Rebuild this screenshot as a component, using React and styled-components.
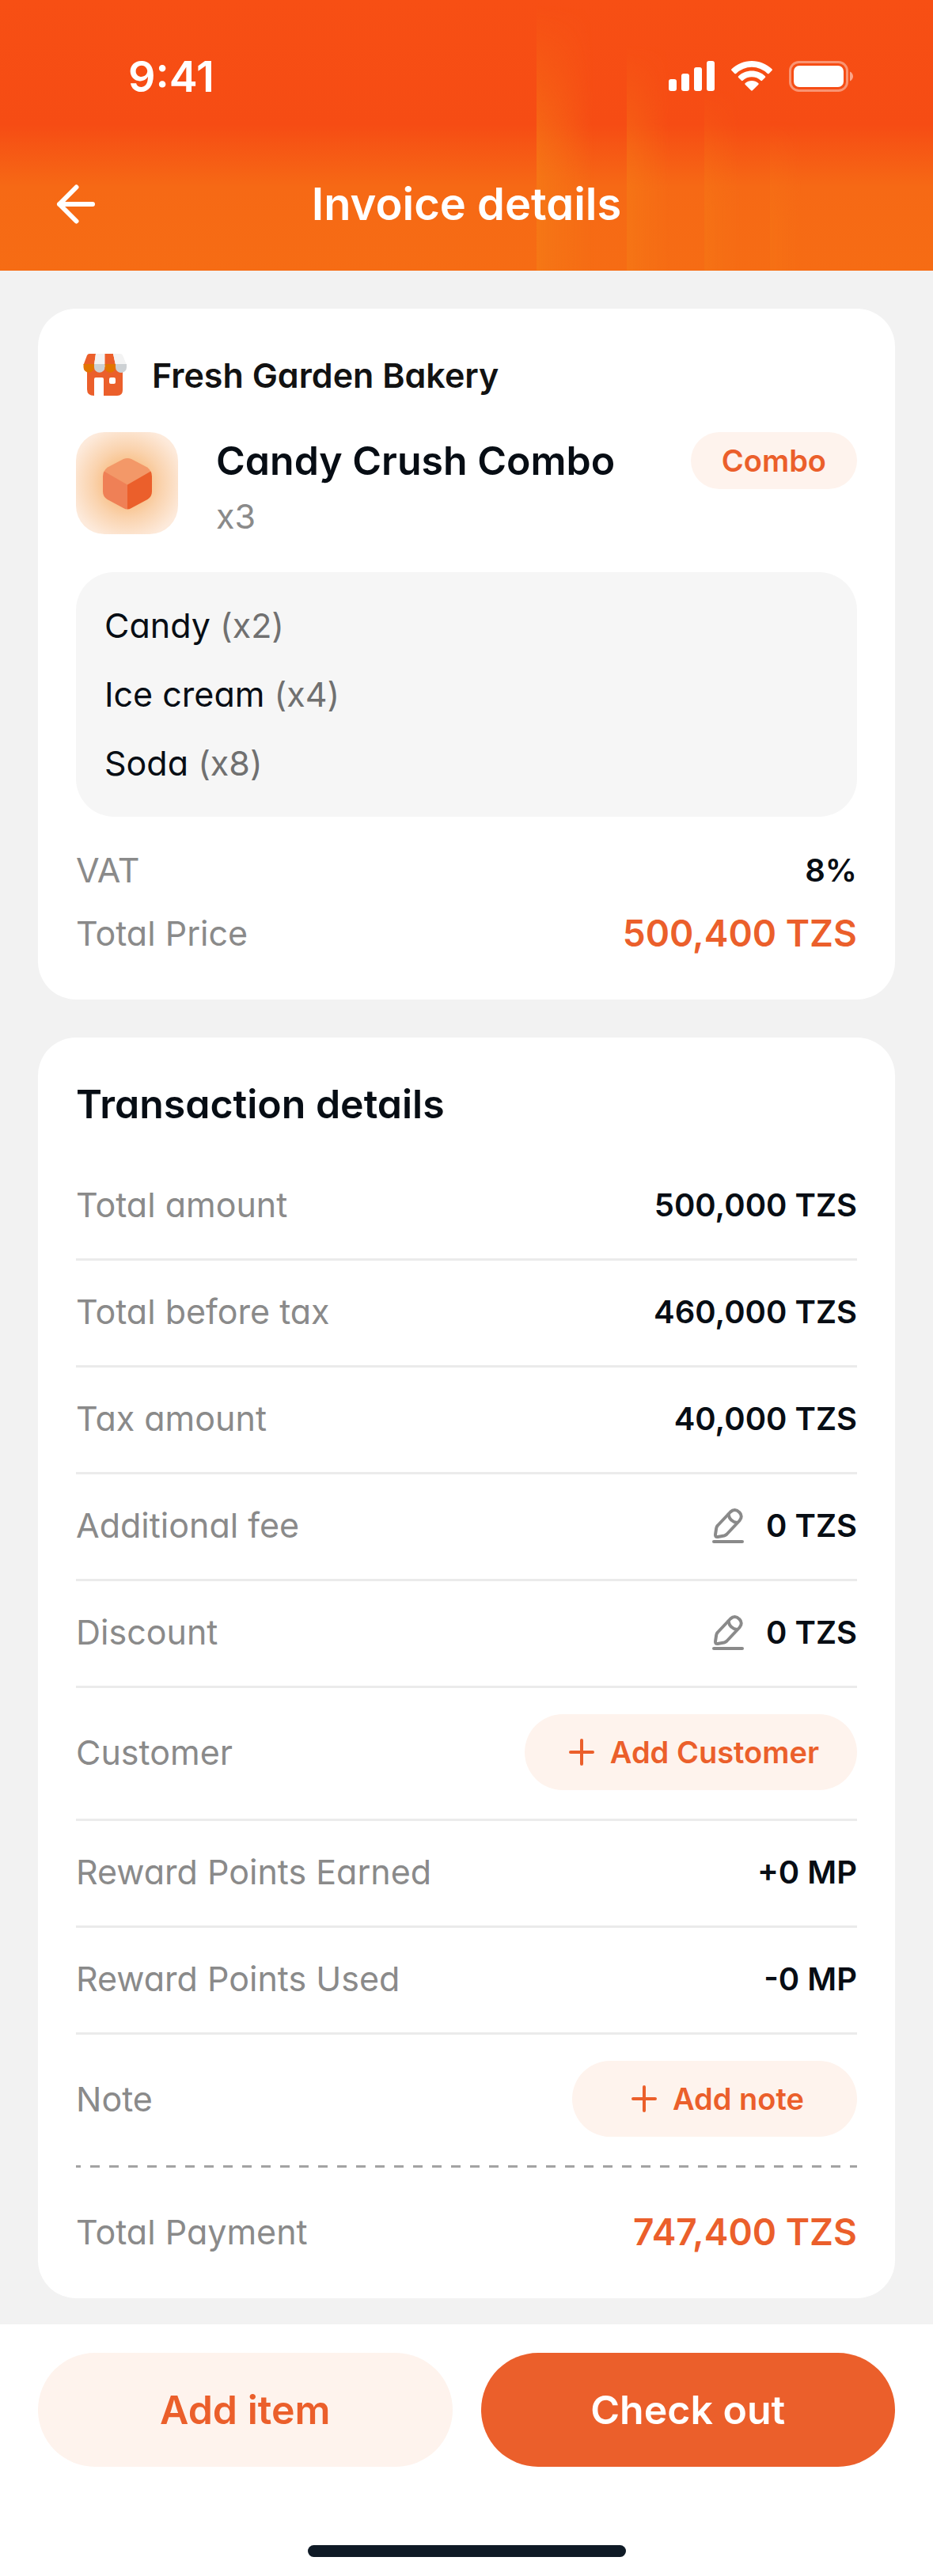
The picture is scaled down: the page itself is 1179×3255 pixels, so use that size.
import styled, { createGlobalStyle } from "styled-components";

const GlobalStyle = createGlobalStyle`
  * {
    box-sizing: border-box;
  }
  body {
    margin: 0;
    background: #f2f2f2;
    color: #070d14;
    font-family: Inter, "Open Sans", sans-serif;
    font-feature-settings: "cv11";
    font-size: 43px;
    line-height: 63px;
  }
  button {
    border: none;
    padding: 0;
    font: inherit;
    font-feature-settings: inherit;
    cursor: pointer;
  }
  svg {
    display: block;
    flex: none;
  }
`;

const Page = styled.div`
  display: flex;
  flex-direction: column;
  min-height: 100vh;
`;

const Header = styled.header`
  position: relative;
  color: white;
  background: linear-gradient(#f74f14 0, #f64c14 46%, #f66915 69%, #f66c14);
`;
const Beam = styled.span`
  position: absolute;
  bottom: 0;
  left: ${(props) => props.$left}%;
  width: ${(props) => props.$width}px;
  height: ${(props) => props.$height}px;
  background: linear-gradient(
    90deg,
    #f57a16,
    rgba(245, 118, 22, 0.7) 40%,
    rgba(246, 112, 20, 0)
  );
  opacity: ${(props) => props.$strength};
  mask-image: linear-gradient(transparent, black 65%);
`;
const StatusBar = styled.div`
  position: relative;
  display: flex;
  align-items: center;
  justify-content: space-between;
  height: 174px;
  padding: 18px 100px 0 162px;
`;
const Clock = styled.time`
  font-size: 54px;
  font-weight: 600;
`;
const StatusIcons = styled.div`
  display: flex;
  align-items: center;
  gap: 21px;
`;
const NavBar = styled.nav`
  position: relative;
  display: grid;
  grid-template-columns: 72px 1fr 72px;
  align-items: center;
  height: 168px;
  padding: 0 60px;
`;
const BackButton = styled.button`
  display: flex;
  align-items: center;
  height: 72px;
  background: none;
  color: inherit;
`;
const PageTitle = styled.h1`
  margin: 0;
  font-size: 56px;
  font-weight: 600;
  line-height: 78px;
  text-align: center;
`;

const Main = styled.main`
  flex: 1;
  display: flex;
  flex-direction: column;
  gap: 48px;
  padding: 48px 48px 33px;
`;
const Card = styled.section`
  padding: 48px;
  border-radius: 48px;
  background: white;
`;
const Shop = styled.div`
  display: flex;
  align-items: center;
  gap: 24px;
  margin-bottom: 36px;
  color: #121212;
`;
const ShopName = styled.h2`
  margin: 0;
  font-size: 43px;
  font-weight: 600;
`;
const Product = styled.div`
  display: flex;
  align-items: flex-start;
  gap: 48px;
  margin-bottom: 39px;
`;
const Thumb = styled.div`
  display: flex;
  align-items: center;
  justify-content: center;
  width: 129px;
  height: 129px;
  border-radius: 36px;
  background: radial-gradient(circle, #f8bf85 25%, #fad3ae 48%, #fdeadb 80%);
`;
const ProductInfo = styled.div`
  flex: 1;
  display: flex;
  flex-direction: column;
  gap: 3px;
`;
const Heading = styled.h3`
  margin: 0;
  font-size: 50px;
  font-weight: 600;
  line-height: 72px;
`;
const Muted = styled.span`
  color: ${(props) => (props.$dark ? "#707070" : "#8a8a8a")};
`;
const Badge = styled.span`
  padding: 0 39px;
  border-radius: 36px;
  background: #fef3ed;
  color: #eb5f2b;
  font-size: 38px;
  font-weight: 600;
  line-height: 72px;
`;
const Contents = styled.ul`
  display: flex;
  flex-direction: column;
  gap: 24px;
  margin: 0 0 36px;
  padding: 36px;
  border-radius: 48px;
  background: #f6f6f6;
  list-style: none;
`;
const Line = styled.div`
  display: flex;
  align-items: center;
  justify-content: space-between;
`;
const PriceLine = styled(Line)`
  margin-top: 12px;
`;
const Value = styled.span`
  display: flex;
  align-items: center;
  gap: 24px;
  font-size: 40px;
  font-weight: 600;
`;
const Price = styled.strong`
  color: #eb5f2b;
  font-size: 46px;
  font-weight: 600;
  line-height: 72px;
`;
const Rows = styled.div`
  margin-top: 27px;
`;
const Row = styled(Line)`
  padding: 33px 0 36px;
  border-bottom: 3px solid #ebebeb;

  &:last-child {
    border-bottom-color: transparent;
    background: repeating-linear-gradient(
        90deg,
        #a3a3a3 0 6px,
        transparent 6px 18px,
        #a3a3a3 18px 24px
      )
      0 100% / 100% 3px no-repeat border-box;
  }
`;
const PaymentLine = styled(Line)`
  margin-top: 45px;
`;
const IconButton = styled.button`
  background: none;
  color: #8a8a8a;
`;
const AddButton = styled.button`
  display: flex;
  align-items: center;
  justify-content: center;
  gap: 12px;
  min-width: 360px;
  height: 96px;
  padding: 0 48px;
  border-radius: 48px;
  background: #fef3ed;
  color: #eb5f2b;
  font-size: 38px;
  font-weight: 600;
`;

const Footer = styled.footer`
  padding: 36px 48px 24px;
  background: white;
`;
const Actions = styled.div`
  display: grid;
  grid-template-columns: 1fr 1fr;
  gap: 36px;
`;
const ActionButton = styled.button`
  height: 144px;
  border-radius: 72px;
  background: ${(props) => (props.$primary ? "#eb5f2b" : "#fef3ed")};
  color: ${(props) => (props.$primary ? "white" : "#eb5f2b")};
  font-size: 50px;
  font-weight: 600;
`;
const HomeIndicator = styled.div`
  width: 402px;
  height: 15px;
  margin: 99px auto 0;
  border-radius: 8px;
  background: #0f1a26;
`;

const SignalIcon = () => (
  <svg width="58" height="38" viewBox="0 0 58 38" fill="white">
    <rect x="0" y="23" width="10" height="15" rx="3" />
    <rect x="16" y="16" width="10" height="22" rx="3" />
    <rect x="32" y="8" width="10" height="30" rx="3" />
    <rect x="48" y="0" width="10" height="38" rx="3" />
  </svg>
);

const WifiIcon = () => (
  <svg width="52" height="38" viewBox="0 0 52 38" fill="white">
    <path d="M26 0C35.600 0 44.800 3.700 51.500 10.300Q52.400 11.200 51.500 12.100L47.700 15.900Q46.800 16.700 45.900 15.900A28.500 28.500 0 0 0 6.100 15.900Q5.200 16.700 4.300 15.900L.5 12.100Q-.4 11.200 .5 10.300C7.200 3.700 16.400 0 26 0Z" />
    <path d="M26 12.500C32.400 12.500 38.400 14.900 42.900 19.200Q43.800 20.100 42.900 21L39.100 24.800Q38.200 25.600 37.300 24.800A16.500 16.500 0 0 0 14.700 24.800Q13.800 25.600 12.900 24.800L9.100 21Q8.200 20.100 9.100 19.200C13.600 14.900 19.600 12.500 26 12.500Z" />
    <path d="M26 25C29.100 25 32 26.100 34.200 28.100Q35.200 29 34.200 30L26.900 37.300Q26 38.100 25.100 37.300L17.800 30Q16.800 29 17.800 28.100C20 26.100 22.900 25 26 25Z" />
  </svg>
);

const BatteryIcon = () => (
  <svg width="82" height="39" viewBox="0 0 82 39" fill="none">
    <rect
      x="1.500"
      y="1.500"
      width="72"
      height="36"
      rx="11"
      stroke="white"
      strokeOpacity=".4"
      strokeWidth="3"
    />
    <rect x="6" y="6" width="63" height="27" rx="7" fill="white" />
    <path d="M77 13.500C79.500 14.600 81 17 81 19.500S79.500 24.400 77 25.500Z" fill="white" fillOpacity=".5" />
  </svg>
);

const BackIcon = () => (
  <svg
    width="72"
    height="72"
    viewBox="0 0 72 72"
    fill="none"
    stroke="white"
    strokeWidth="6"
    strokeLinecap="round"
    strokeLinejoin="round"
  >
    <path d="M57 36H15M36.500 14.500L15 36L36.500 57.500" />
  </svg>
);

const ShopIcon = () => (
  <svg width="72" height="72" viewBox="0 0 72 72">
    <path
      fill="#eb5f2b"
      d="M14 26H59V55Q59 62 52 62H35V41Q35 39 33 39H25Q23 39 23 41V62Q14 62 14 54ZM44 39Q42 39 42 41V45Q42 47 44 47H48Q50 47 50 45V41Q50 39 48 39Z"
      fillRule="evenodd"
    />
    <path fill="#eb5f2b" d="M17 9H25L23 23H9.500L14 11Q15 9 17 9Z" />
    <path fill="#f3f3f3" d="M25 9H36.500V23H23Z" />
    <path fill="#eb5f2b" d="M36.500 9H47L50 23H36.500Z" />
    <path fill="#f3f3f3" d="M47 9H56Q58 9 59 11L64 23H50Z" />
    <path fill="#e27500" d="M9.500 22H23V26A6.750 6.750 0 0 1 9.500 26Z" />
    <path fill="#cdd1d4" d="M23 22H36.500V26A6.750 6.750 0 0 1 23 26Z" />
    <path fill="#e27500" d="M36.500 22H50V26A6.750 6.750 0 0 1 36.500 26Z" />
    <path fill="#cdd1d4" d="M50 22H64V26A7 7 0 0 1 50 26Z" />
  </svg>
);

const CubeIcon = () => (
  <svg width="64" height="66" viewBox="0 0 64 66">
    <path fill="#f39868" d="M27 2Q32 0 37 2L57 12.500Q60 14.500 61.500 18L32 35L2.500 18Q4 14.500 7 12.500Z" />
    <path fill="#ef8056" d="M2.500 17.500L32 34.500V65.500Q29.500 65.500 27 64L6.500 53Q1 49.500 1 43V24Q1 20 2.500 17.500Z" />
    <path fill="#eb5f2b" d="M61.500 17.500L32 34.500V65.500Q34.500 65.500 37 64L57.500 53Q63 49.500 63 43V24Q63 20 61.500 17.500Z" />
  </svg>
);

const EditIcon = () => (
  <svg
    width="48"
    height="48"
    viewBox="0 0 48 48"
    fill="none"
    stroke="currentColor"
    strokeWidth="4"
    strokeLinecap="round"
    strokeLinejoin="round"
  >
    <path d="M6 44H42" />
    <path d="M27 6.500L11 23.500Q9.500 25 9.200 27L8 35Q7.600 38.500 11 38L19 36.500Q21 36 22.500 34.500L38.500 17.500C41.500 14 41.500 10 38.200 6.800C34.800 3.300 30.500 3 27 6.500Z" />
    <path d="M24.500 9.500C25.500 15 29.500 19.200 35.500 20" />
  </svg>
);

const PlusIcon = () => (
  <svg
    width="48"
    height="48"
    viewBox="0 0 48 48"
    stroke="currentColor"
    strokeWidth="4"
    strokeLinecap="round"
  >
    <path d="M10 24H38M24 9V39" />
  </svg>
);

const beams = [
  { left: 57.5, width: 72, height: 335, strength: 0.8 },
  { left: 67.2, width: 54, height: 285, strength: 0.65 },
  { left: 75.5, width: 45, height: 230, strength: 0.45 },
  { left: 82.5, width: 39, height: 190, strength: 0.35 },
];

const contents = [
  { name: "Candy", count: 2 },
  { name: "Ice cream", count: 4 },
  { name: "Soda", count: 8 },
];

const transactions = [
  { label: "Total amount", value: "500,000 TZS" },
  { label: "Total before tax", value: "460,000 TZS" },
  { label: "Tax amount", value: "40,000 TZS" },
  { label: "Additional fee", value: "0 TZS", editable: true },
  { label: "Discount", value: "0 TZS", editable: true },
  { label: "Customer", action: "Add Customer" },
  { label: "Reward Points Earned", value: "+0 MP" },
  { label: "Reward Points Used", value: "-0 MP" },
  { label: "Note", action: "Add note" },
];

const TransactionRow = ({ label, value, editable, action }) => (
  <Row>
    <Muted>{label}</Muted>
    {action ? (
      <AddButton type="button">
        <PlusIcon />
        {action}
      </AddButton>
    ) : (
      <Value>
        {editable && (
          <IconButton type="button" aria-label={`Edit ${label}`}>
            <EditIcon />
          </IconButton>
        )}
        <span>{value}</span>
      </Value>
    )}
  </Row>
);

const App = () => {
  return (
    <Page>
      <GlobalStyle />
      <Header>
        {beams.map((beam) => (
          <Beam
            key={beam.left}
            $left={beam.left}
            $width={beam.width}
            $height={beam.height}
            $strength={beam.strength}
          />
        ))}
        <StatusBar>
          <Clock>9:41</Clock>
          <StatusIcons>
            <SignalIcon />
            <WifiIcon />
            <BatteryIcon />
          </StatusIcons>
        </StatusBar>
        <NavBar>
          <BackButton type="button" aria-label="Back">
            <BackIcon />
          </BackButton>
          <PageTitle>Invoice details</PageTitle>
        </NavBar>
      </Header>

      <Main>
        <Card>
          <Shop>
            <ShopIcon />
            <ShopName>Fresh Garden Bakery</ShopName>
          </Shop>
          <Product>
            <Thumb>
              <CubeIcon />
            </Thumb>
            <ProductInfo>
              <Heading>Candy Crush Combo</Heading>
              <Muted>x3</Muted>
            </ProductInfo>
            <Badge>Combo</Badge>
          </Product>
          <Contents>
            {contents.map((item) => (
              <li key={item.name}>
                {item.name} <Muted $dark>(x{item.count})</Muted>
              </li>
            ))}
          </Contents>
          <Line>
            <Muted>VAT</Muted>
            <Value>8%</Value>
          </Line>
          <PriceLine>
            <Muted>Total Price</Muted>
            <Price>500,400 TZS</Price>
          </PriceLine>
        </Card>

        <Card>
          <Heading>Transaction details</Heading>
          <Rows>
            {transactions.map((row) => (
              <TransactionRow key={row.label} {...row} />
            ))}
          </Rows>
          <PaymentLine>
            <Muted>Total Payment</Muted>
            <Price>747,400 TZS</Price>
          </PaymentLine>
        </Card>
      </Main>

      <Footer>
        <Actions>
          <ActionButton type="button">Add item</ActionButton>
          <ActionButton type="button" $primary>
            Check out
          </ActionButton>
        </Actions>
        <HomeIndicator />
      </Footer>
    </Page>
  );
};
export default App;
